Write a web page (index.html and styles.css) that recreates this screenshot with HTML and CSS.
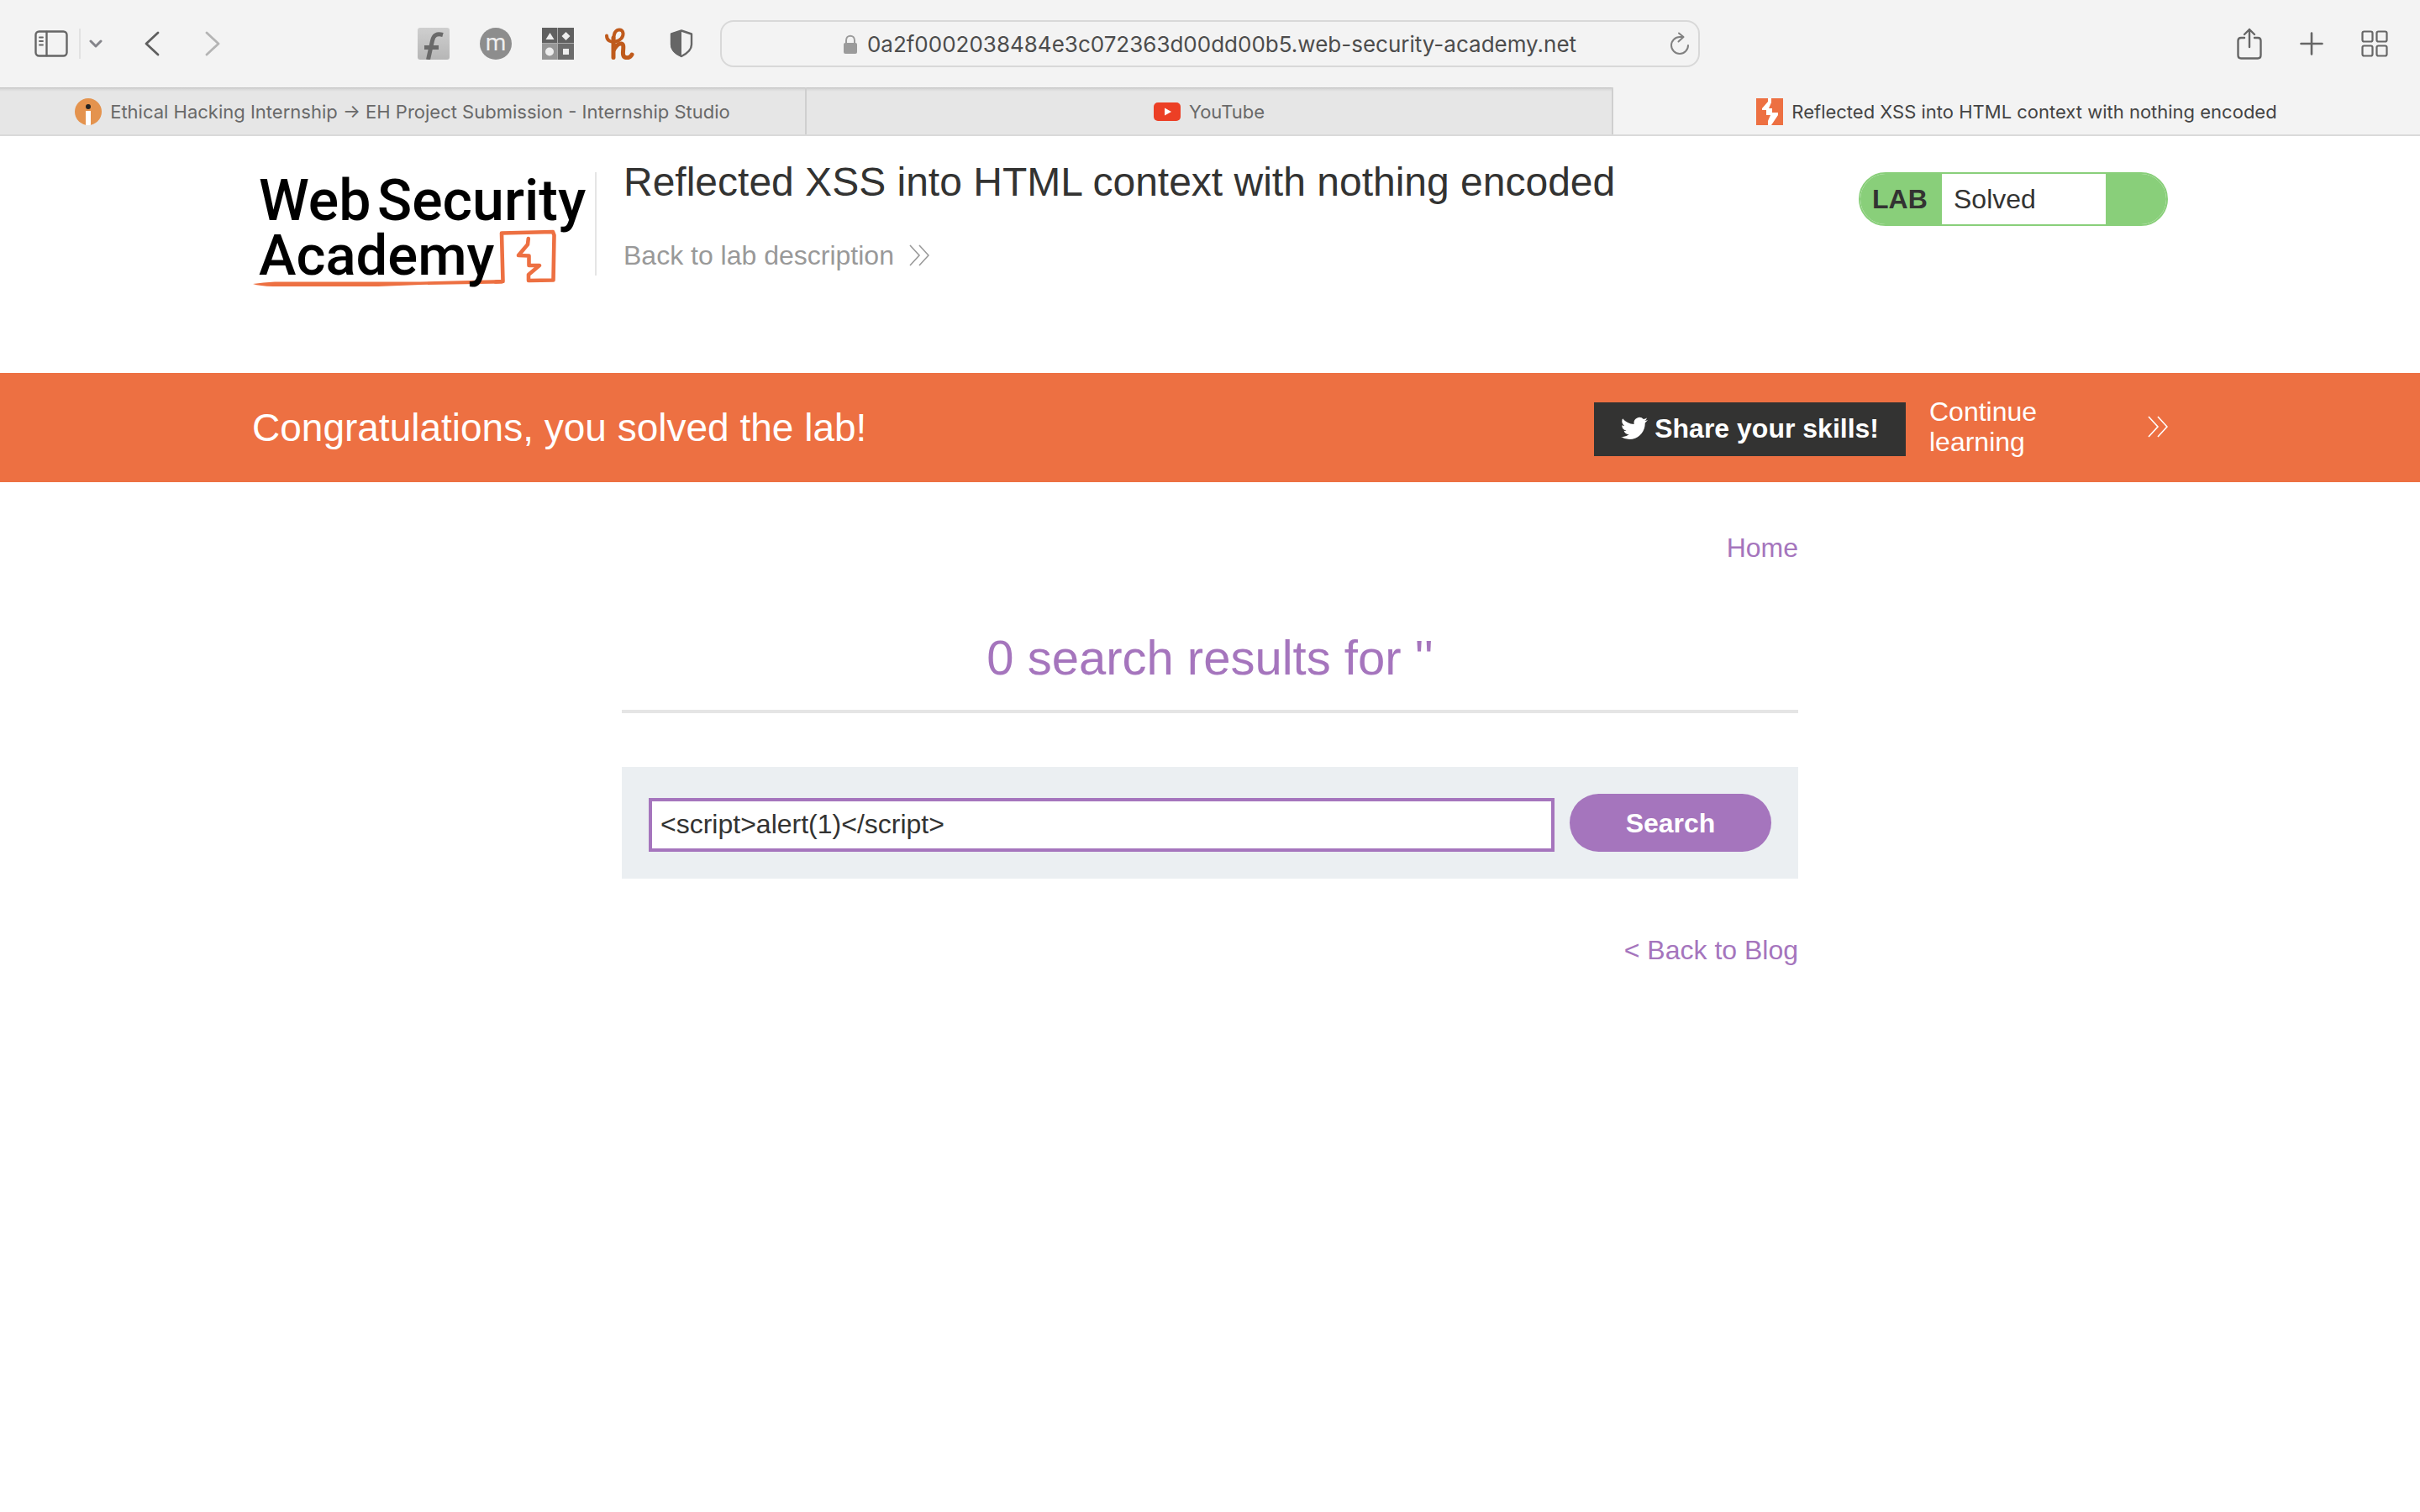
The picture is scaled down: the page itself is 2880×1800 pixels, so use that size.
FILE: index.html
```html
<!DOCTYPE html>
<html lang="en">
<head>
<meta charset="utf-8">
<title>Reflected XSS into HTML context with nothing encoded</title>
<link rel="stylesheet" href="styles.css">
</head>
<body>
<div class="browser">
  <div class="toolbar">
    <div class="nav-tools">
      <button class="tool" aria-label="Sidebar"><svg width="40" height="32" viewBox="0 0 40 32" fill="none" stroke="#666" stroke-width="2.4" stroke-linecap="round"><rect x="1.5" y="1.5" width="37" height="29" rx="4"/><path d="M14.500 2v28"/><path d="M6 8.500h4M6 13h4M6 17.500h4" stroke-width="1.800"/></svg></button>
      <span class="tool-divider"></span>
      <button class="tool tool-menu" aria-label="Tab groups"><svg width="16" height="12" viewBox="0 0 16 12" fill="none" stroke="#84848a" stroke-width="3" stroke-linecap="round" stroke-linejoin="round"><path d="M2 3l6 6 6-6"/></svg></button>
      <button class="tool tool-back" aria-label="Back"><svg width="18" height="32" viewBox="0 0 18 32" fill="none" stroke="#5f5f5f" stroke-width="2.800" stroke-linecap="round" stroke-linejoin="round"><path d="M16 3L2 16l14 13"/></svg></button>
      <button class="tool tool-forward" aria-label="Forward"><svg width="18" height="32" viewBox="0 0 18 32" fill="none" stroke="#b4b4b4" stroke-width="2.800" stroke-linecap="round" stroke-linejoin="round"><path d="M2 3l14 13L2 29"/></svg></button>
    </div>
    <div class="extensions">
      <button class="tool" aria-label="Font finder"><svg width="38" height="38" viewBox="0 0 38 38"><defs><linearGradient id="g1" x2="0" y2="1"><stop stop-color="#cfcfcf"/><stop offset="1" stop-color="#b6b6b6"/></linearGradient></defs><rect width="38" height="38" rx="3" fill="url(#g1)"/><path d="M30 8.500c-7-2-11 0-12.500 7L12.500 38M8 23.500h17" fill="none" stroke="#6a6a6a" stroke-width="5"/></svg></button>
      <button class="tool" aria-label="Mail"><svg width="38" height="38" viewBox="0 0 38 38"><circle cx="19" cy="19" r="19" fill="#8d8d8d"/><text x="19" y="27" text-anchor="middle" class="m-mark">m</text></svg></button>
      <button class="tool" aria-label="Shapes"><svg width="38" height="38" viewBox="0 0 38 38"><path fill="#606060" d="M0 0h18v18H0zM19 0h19v18H19z"/><path fill="#969696" d="M0 19h18v19H0z"/><path fill="#6c6c6c" d="M19 19h19v19H19z"/><path d="M18.500 0v38M0 18.500h38" stroke="#aaa"/><g fill="#eee"><path d="M9.500 6l5 8h-10zM28.500 5l5 5-5 5-5-5zM25 25h7v7h-7z"/><circle cx="9" cy="28.500" r="5"/></g></svg></button>
      <button class="tool" aria-label="Honey"><svg width="38" height="38" viewBox="0 0 38 38" fill="none" stroke="#bf5a1c" stroke-linecap="round" stroke-linejoin="round"><path d="M3 9.500c0 6 5 8 10.500 7C19.500 15.500 23 11 22.500 6.500 22 1 14 1 12 8c-1 4-1 8-1 12" stroke-width="4"/><path d="M11 12v23.500M11 28c2-6 6-9.500 9.500-9 4 .5 1.500 8 2 12.500.5 5.500 8 5.500 10.500.5" stroke-width="5"/></svg></button>
      <button class="tool" aria-label="Privacy report"><svg width="38" height="38" viewBox="0 0 38 38"><path d="M18 3.500l12 4V20c0 7-6 11-12 14-6-3-12-7-12-14V7.500z" fill="none" stroke="#666" stroke-width="2.400" stroke-linejoin="round"/><path d="M18 3L5 7v13c0 7.500 6 12 13 15z" fill="#666"/></svg></button>
    </div>
    <div class="address">
      <div class="address-site">
        <svg width="16" height="24" viewBox="0 0 16 24"><rect y="10" width="16" height="13" rx="2" fill="#9b9b9b"/><path d="M3 11V7c0-7 10-7 10 0v4" fill="none" stroke="#9b9b9b" stroke-width="2"/></svg>
        <span>0a2f0002038484e3c072363d00dd00b5.web-security-academy.net</span>
      </div>
      <button class="tool" aria-label="Reload"><svg width="24" height="28" viewBox="0 0 24 28" fill="none" stroke="#808080" stroke-width="2" stroke-linecap="round" stroke-linejoin="round"><path d="M22 16a10 10 0 1 1-10-10h4M11 1.500l5.500 4.500-6 5.500"/></svg></button>
    </div>
    <div class="page-tools">
      <button class="tool tool-share" aria-label="Share"><svg width="30" height="38" viewBox="0 0 30 38" fill="none" stroke="#666" stroke-width="2.400" stroke-linecap="round" stroke-linejoin="round"><path d="M9 12H5q-3.500 0-3.500 3.500v17Q1.500 36.500 5 36.500h20q3.500 0 3.500-4v-17Q28.500 12 25 12h-4M15 23V2M9 8l6-6 6 6"/></svg></button>
      <button class="tool" aria-label="New tab"><svg width="28" height="28" viewBox="0 0 28 28" stroke="#666" stroke-width="2.600" stroke-linecap="round"><path d="M14 1.500v25M1.500 14h25"/></svg></button>
      <button class="tool" aria-label="Tab overview"><svg width="32" height="32" viewBox="0 0 32 32" fill="none" stroke="#666" stroke-width="2.200"><rect x="1.500" y="1.500" width="12" height="12" rx="2"/><rect x="18.500" y="1.500" width="12" height="12" rx="2"/><rect x="1.500" y="18.500" width="12" height="12" rx="2"/><rect x="18.500" y="18.500" width="12" height="12" rx="2"/></svg></button>
    </div>
  </div>
  <nav class="tabs">
    <a class="tab" href="#"><svg width="32" height="32" viewBox="0 0 32 32"><circle cx="16" cy="16" r="16" fill="#e4934e"/><circle cx="16" cy="10" r="3" fill="#222"/><path d="M13 15h6v16.700a16 16 0 0 1-6 0z" fill="#fff"/></svg><span>Ethical Hacking Internship → EH Project Submission - Internship Studio</span></a>
    <a class="tab" href="#"><svg width="32" height="22" viewBox="0 0 32 22"><rect width="32" height="22" rx="5" fill="#ec3f25"/><path d="M13 6.500l8 4.500-8 4.500z" fill="#fff"/></svg><span>YouTube</span></a>
    <a class="tab tab-current" href="#"><svg width="32" height="32" viewBox="0 0 32 32"><path d="M0 0h32v32H0z" fill="#ed7042"/><path d="M14 0h4v5l-3 7h4v5h7v3l-8 12h-4v-5l3-7h-5v-6H7v-2l7-8z" fill="#fff"/></svg><span>Reflected XSS into HTML context with nothing encoded</span></a>
  </nav>
</div>

<header class="lab-header">
  <div class="container header-row">
    <a class="logo" href="#" aria-label="Web Security Academy">
      <svg width="400" height="152" viewBox="0 0 400 152">
        <path d="M1 138q12-2 26-2.500L200 135.500l98-2.500v4.500l-98 1.500-50 2H25Q9 140.500 1 138z" fill="#ed7042"/>
        <path d="M290 135.500l8.500-.5L297 77.500l61-1.500 1.500 4L358.500 133.500 329 134v-7L342 116h-12.500v-11.500l-12.500-.5L328 91l.8-7" fill="none" stroke="#ed7042" stroke-width="4.600" stroke-linejoin="round" stroke-linecap="round"/>
        <g class="logo-text"><text x="8" y="62">Web</text><text x="149" y="62">Security</text><text class="logo-academy" x="8" y="127">Academy</text></g>
      </svg>
    </a>
    <div class="title">
      <h2>Reflected XSS into HTML context with nothing encoded</h2>
      <a class="back-link" href="#"><span>Back to lab description</span><svg width="24" height="26" viewBox="0 0 24 26" fill="none" stroke="#999" stroke-width="1.600"><path d="M1 1l11 12L1 25M12 1l11 12-11 12"/></svg></a>
    </div>
    <div class="lab-status"><strong>LAB</strong><p>Solved</p><span class="status-end"></span></div>
  </div>
</header>

<section class="banner">
  <div class="container banner-row">
    <h4>Congratulations, you solved the lab!</h4>
    <button class="share"><svg width="32" height="28" viewBox="0 2 24 20"><path fill="#fff" d="M23.950 4.570a10 10 0 0 1-2.820.770 4.960 4.960 0 0 0 2.160-2.720c-.950.550-2 .950-3.120 1.180a4.920 4.920 0 0 0-8.380 4.480C7.690 8.090 4.070 6.130 1.640 3.160a4.920 4.920 0 0 0 1.520 6.570 4.900 4.900 0 0 1-2.230-.610v.060a4.920 4.920 0 0 0 3.950 4.830 5 5 0 0 1-2.210.080 4.940 4.940 0 0 0 4.600 3.420A9.870 9.870 0 0 1 0 19.540a14 14 0 0 0 7.550 2.210c9.050 0 14-7.500 14-13.980 0-.210 0-.420-.020-.630a9.940 9.940 0 0 0 2.460-2.550z"/></svg><span>Share your skills!</span></button>
    <a class="continue" href="#"><span>Continue learning</span><svg width="24" height="26" viewBox="0 0 24 26" fill="none" stroke="#fff" stroke-width="1.600"><path d="M1 1l11 12L1 25M12 1l11 12-11 12"/></svg></a>
  </div>
</section>

<main class="blog">
  <nav class="home"><a href="#">Home</a></nav>
  <h1>0 search results for ''</h1>
  <hr>
  <form class="search">
    <input type="text" name="search" aria-label="Search the blog" value="&lt;script&gt;alert(1)&lt;/script&gt;">
    <button type="submit">Search</button>
  </form>
  <div class="back-to-blog"><a href="#">&lt; Back to Blog</a></div>
</main>
</body>
</html>
```
FILE: styles.css
```css
* { box-sizing: border-box; }
body { margin: 0; background: #fff; color: #333332; font: 32px/36px "Liberation Sans", Arial, sans-serif; }
h1, h2, h4, p { margin: 0; font-weight: 400; }
a { color: inherit; text-decoration: none; }
button { font: inherit; border: 0; cursor: pointer; }
svg { display: block; flex: none; }

.browser { background: #f3f3f3; border-bottom: 2px solid #dadada; font-family: Inter, sans-serif; }
.toolbar { display: grid; grid-template-columns: 1fr minmax(0, 1166px) 1fr; grid-template-areas: "left address right"; height: 104px; align-items: center; }
.tool { padding: 0; background: none; }
.nav-tools { grid-area: left; justify-self: start; display: flex; align-items: center; padding-left: 41px; }
.tool-divider { width: 2px; height: 36px; margin-left: 13px; background: #e2e2e2; }
.tool-menu { margin-left: 10px; }
.tool-back { margin-left: 50px; }
.tool-forward { margin-left: 54px; }
.extensions { grid-area: left; justify-self: end; display: flex; gap: 36px; padding-right: 26px; }
.address { grid-area: address; display: flex; align-items: center; height: 56px; border: 2px solid #d8d8d8; border-radius: 16px; padding: 0 10px 0 34px; font-size: 26px; color: #4c4c4c; }
.address-site { flex: 1; display: flex; align-items: center; justify-content: center; gap: 12px; padding-top: 2px; }
.page-tools { grid-area: right; justify-self: end; display: flex; align-items: center; gap: 45px; padding-right: 38px; }
.m-mark { font: 28px Roboto, sans-serif; fill: #eee; }

.tabs { display: grid; grid-template-columns: repeat(3, 1fr); font-size: 22px; height: 56px; }
.tab { display: flex; align-items: center; justify-content: center; gap: 10px; padding-top: 2px; color: #696969; background: linear-gradient(#c2c2c2, #d8d8d8 2px, #e6e6e6 5px); border-right: 2px solid #cfcfcf; }
.tab-current { background: none; color: #444; border: 0; }

.container { max-width: 2280px; margin: 0 auto; }
.lab-header { padding: 28px 0 92px; }
.header-row { display: flex; align-items: flex-start; }
.logo { display: block; width: 410px; height: 152px; margin-top: 10px; background: linear-gradient(#e5e5e5, #e5e5e5) right 5px / 2px 123px no-repeat; }
.logo-text { font: 500 68px Roboto, sans-serif; fill: #000; }
.logo-academy { font-size: 67px; }
.title { flex: 1; padding: 0 32px; }
.title h2 { font-size: 48px; line-height: 54px; }
.back-link { display: inline-flex; align-items: center; gap: 18px; margin-top: 42px; color: #999; }
.lab-status { display: flex; width: 368px; height: 64px; margin-top: 15px; border: 2px solid #89cf7a; border-radius: 32px; overflow: hidden; line-height: 60px; background: #fff; }
.lab-status strong { width: 97px; padding-left: 14px; background: #89cf7a; }
.lab-status p { flex: 1; padding-left: 14px; }
.status-end { width: 72px; background: #89cf7a; }

.banner { background: #ed7042; color: #fff; }
.banner-row { display: flex; align-items: center; min-height: 130px; }
.banner h4 { flex: 1; font-size: 46px; line-height: 54px; }
.share { display: flex; align-items: center; gap: 8px; height: 64px; margin-top: 4px; padding: 0 32px 2px; background: #333332; color: #fff; font-weight: 700; }
.continue { display: flex; align-items: center; justify-content: space-between; width: 312px; padding: 0 0 2px 28px; }
.continue span { width: 160px; }

.blog { max-width: 1400px; margin: 0 auto; padding-top: 60px; color: #a575bd; }
.home, .back-to-blog { text-align: right; }
.blog h1 { margin-top: 80px; font-size: 58px; line-height: 66px; text-align: center; }
.blog hr { height: 4px; margin: 29px 0 64px; border: 0; background: #e5e5e5; }
.search { display: flex; align-items: center; gap: 18px; padding: 32px; background: #ebeff2; }
.search input { flex: 1; min-width: 0; height: 64px; margin-top: 4px; padding: 0 10px; border: 4px solid #a575bd; border-radius: 0; background: #fff; color: #333332; font: inherit; }
.search button { width: 240px; height: 69px; border-radius: 35px; background: #a575bd; color: #fff; font-weight: 700; }
.back-to-blog { margin-top: 67px; }
```
